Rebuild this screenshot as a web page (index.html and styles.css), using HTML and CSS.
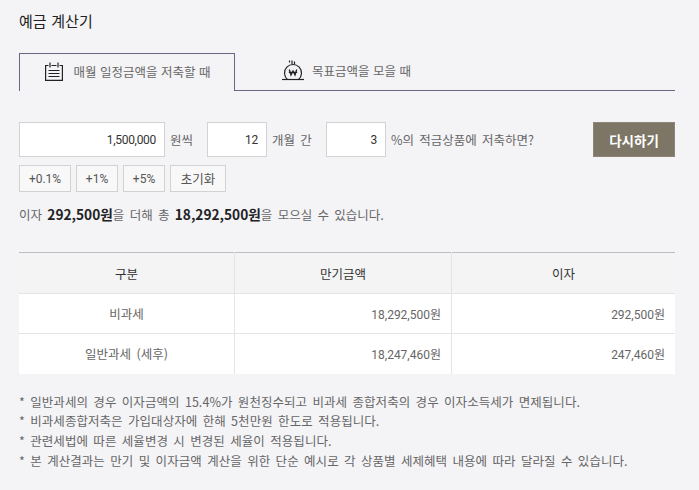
FILE: index.html
```html
<!DOCTYPE html>
<html lang="ko">
<head>
<meta charset="utf-8">
<title>예금 계산기</title>
<link rel="stylesheet" href="styles.css">
</head>
<body>
<main class="page">
  <h1 class="title">예금 계산기</h1>
  <div class="tabs">
    <div class="tab tab-active">
      <svg class="tab-icon" width="18" height="19" viewBox="0 0 18 19" fill="none" stroke="#222" stroke-width="1.2">
        <path d="M3.500 3.500H0.600V18.400H17.400V3.500H14.500M6.500 3.500H11.500"/>
        <path d="M5 0.500V5.500M13 0.500V5.500"/>
        <path d="M3.500 8.500H14.500M3.500 11.500H14.500M3.500 14.500H14.500"/>
      </svg>
      <span>매월 일정금액을 저축할 때</span>
    </div>
    <div class="tab tab-goal">
      <svg class="tab-icon" width="22" height="21" viewBox="0 0 22 21" fill="none" stroke="#222" stroke-width="1.2">
        <path d="M0 19.500H22"/>
        <path d="M5.500 19.500A8.500 8.500 0 1 1 16.500 19.500"/>
        <path d="M7.500 0.500V2.500M10 0.500V4M12.500 1.500V4.500"/>
        <path d="M7.300 9.500L9 15L11 11L13 15L14.700 9.500M6.800 12.300H15.200" stroke-width="1.300"/>
      </svg>
      <span>목표금액을 모을 때</span>
    </div>
  </div>

  <div class="form-row">
    <input class="field field-wide" type="text" value="1,500,000">
    <span class="unit unit-won">원씩</span>
    <input class="field field-mid" type="text" value="12">
    <span class="unit unit-month">개월 간</span>
    <input class="field field-mid" type="text" value="3">
    <span class="unit">%의 적금상품에 저축하면?</span>
    <button class="reset" type="button">다시하기</button>
  </div>

  <div class="chips">
    <button class="chip chip-a" type="button">+0.1%</button>
    <button class="chip chip-b" type="button">+1%</button>
    <button class="chip chip-b" type="button">+5%</button>
    <button class="chip chip-c" type="button">초기화</button>
  </div>

  <p class="result">이자 <strong>292,500원</strong>을 더해 총 <strong>18,292,500원</strong>을 모으실 수 있습니다.</p>

  <table class="table">
    <thead>
      <tr><th class="col-a">구분</th><th class="col-b">만기금액</th><th>이자</th></tr>
    </thead>
    <tbody>
      <tr><td class="center">비과세</td><td>18,292,500원</td><td>292,500원</td></tr>
      <tr><td class="center">일반과세 (세후)</td><td>18,247,460원</td><td>247,460원</td></tr>
    </tbody>
  </table>

  <ul class="notes">
    <li>* 일반과세의 경우 이자금액의 15.4%가 원천징수되고 비과세 종합저축의 경우 이자소득세가 면제됩니다.</li>
    <li>* 비과세종합저축은 가입대상자에 한해 5천만원 한도로 적용됩니다.</li>
    <li>* 관련세법에 따른 세율변경 시 변경된 세율이 적용됩니다.</li>
    <li>* 본 계산결과는 만기 및 이자금액 계산을 위한 단순 예시로 각 상품별 세제혜택 내용에 따라 달라질 수 있습니다.</li>
  </ul>
</main>
</body>
</html>
```
FILE: styles.css
```css
* { box-sizing: border-box; }
html, body { margin: 0; padding: 0; }
body {
  width: 699px;
  height: 490px;
  overflow: hidden;
  background: #f4f4f7;
  color: #555;
  font-family: "Noto Sans CJK KR", "Noto Sans", sans-serif;
  font-size: 12.5px;
  word-spacing: 1.8px;
}
.page { padding: 0 24px 0 19px; }
.title {
  margin: 0;
  padding-top: 11px;
  height: 53px;
  font-size: 15px;
  line-height: 20px;
  font-weight: 400;
  color: #222;
  word-spacing: 0.5px;
}
.tabs {
  display: flex;
  height: 38px;
  border-bottom: 1px solid #6b6685;
}
.tab {
  height: 38px;
  display: flex;
  align-items: center;
  justify-content: center;
  color: #666;
  padding-bottom: 3px;
  word-spacing: 0;
}
.tab-active {
  width: 216px;
  gap: 10px;
  padding-left: 2px;
  border: 1px solid #6b6685;
  border-bottom: 0;
  background: #f4f4f7;
}
.tab-goal { width: 223px; gap: 8px; }
.tab-icon { flex: none; }
.form-row {
  margin-top: 31px;
  display: flex;
  align-items: center;
  height: 35px;
}
.field {
  height: 35px;
  border: 1px solid #d2d2d2;
  background: #fff;
  text-align: right;
  padding: 0 8px;
  font-family: "Roboto", "Noto Sans CJK KR", sans-serif;
  font-size: 12px;
  letter-spacing: -0.3px;
  color: #333;
  border-radius: 0;
  outline: 0;
}
.field-wide { width: 146px; }
.field-mid { width: 60px; }
.unit { color: #666; margin-left: 5px; }
.unit-won { width: 37px; }
.unit-month { width: 54px; }
.reset {
  margin-left: auto;
  width: 82px;
  height: 35px;
  border: 1px solid #8c8578;
  background: #7d7565;
  color: #fff;
  font-family: inherit;
  font-size: 13.5px;
  font-weight: 700;
  padding: 0;
}
.chips { display: flex; gap: 5px; margin-top: 8px; }
.chip {
  height: 27px;
  border: 1px solid #d2d2d2;
  background: #f8f8f8;
  color: #555;
  font-family: "Roboto", "Noto Sans CJK KR", sans-serif;
  font-size: 12px;
  padding: 0;
}
.chip-a { width: 52px; }
.chip-b { width: 42px; }
.chip-c { width: 56px; font-size: 12.5px; }
.result {
  margin: 13px 0 0;
  height: 18px;
  line-height: 18px;
  color: #666;
}
.result strong { color: #222; font-size: 13.700px; font-weight: 700; word-spacing: 0; }
.table {
  margin-top: 29px;
  width: 656px;
  border-collapse: collapse;
  table-layout: fixed;
}
.table thead tr { border-top: 1px solid #bdbdbd; }
.col-a { width: 215.500px; }
.col-b { width: 217px; }
.table th {
  height: 41px;
  background: #f4f4f5;
  font-weight: 400;
  color: #333;
  border-bottom: 1px solid #e4e4e4;
  border-left: 1px solid #e4e4e4;
  padding: 0;
}
.table td {
  height: 40px;
  background: #fff;
  text-align: right;
  padding: 0 10px;
  color: #666;
  font-family: "Roboto", "Noto Sans CJK KR", sans-serif;
  font-size: 12px;
  border-bottom: 1px solid #e4e4e4;
  border-left: 1px solid #e4e4e4;
}
.table th:first-child, .table td:first-child { border-left: 0; }
.table td.center {
  text-align: center;
  font-family: "Noto Sans CJK KR", sans-serif;
  font-size: 12.5px;
}
.table tbody tr:last-child td { border-bottom: 0; }
.notes {
  list-style: none;
  margin: 18px 0 0;
  padding: 0;
  line-height: 19.700px;
  letter-spacing: 0.05px;
  color: #666;
}
```
